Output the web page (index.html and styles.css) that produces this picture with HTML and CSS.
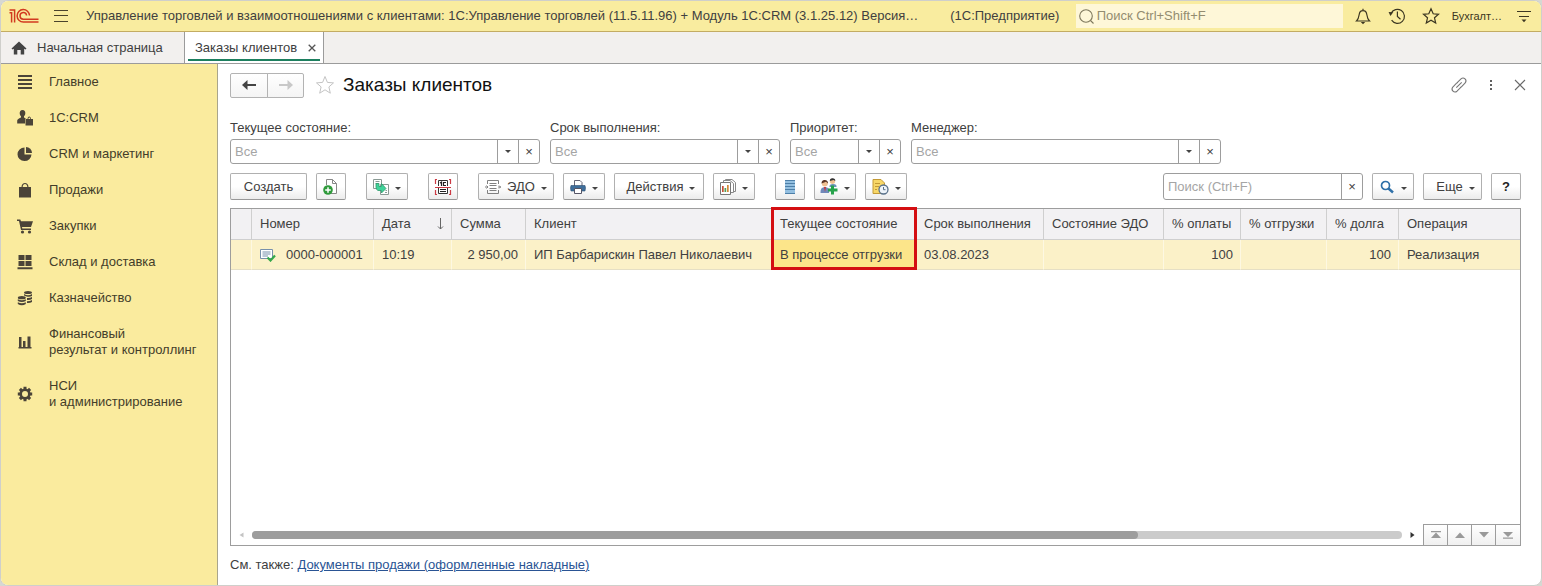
FILE: index.html
```html
<!DOCTYPE html>
<html lang="ru">
<head>
<meta charset="utf-8">
<title>Заказы клиентов</title>
<link rel="stylesheet" href="styles.css">
</head>
<body>
<div class="app">
  <header class="topbar">
    <svg class="logo" width="30" height="16" viewBox="0 0 30 16" fill="none" stroke="#d23a20" stroke-width="1.500">
      <path d="M0.500 4.800H2.600V14.500M0.500 2H5.600V14.500"/>
      <path d="M20.500 7.500A6.200 6.200 0 1 0 14.300 14H29.500"/>
      <path d="M17.600 7.500A3.300 3.300 0 1 0 14.300 11.200H29.500"/>
    </svg>
    <button class="plain menu" aria-label="Меню">
      <svg width="16" height="14" viewBox="0 0 16 14" stroke="#4a432c"><path d="M1 1.500H15M1 6.500H15M1 12.500H15"/></svg>
    </button>
    <div class="app-title"><span class="config">Управление торговлей и взаимоотношениями с клиентами: 1С:Управление торговлей (11.5.11.96) + Модуль 1С:CRM (3.1.25.12) Версия…</span><span>(1С:Предприятие)</span></div>
    <label class="global-search">
      <svg width="17" height="17" viewBox="0 0 17 17" fill="none" stroke="#7d775c" stroke-width="1.1"><circle cx="8" cy="8" r="6.3"/><path d="M12.500 12.500L15.500 15.500"/></svg>
      <input type="text" aria-label="Поиск" placeholder="Поиск Ctrl+Shift+F">
    </label>
    <div class="top-actions">
      <button class="plain" aria-label="Уведомления"><svg width="18" height="18" viewBox="0 0 18 18" fill="none" stroke="#3c3722" stroke-width="1.2"><path d="M2.500 14C4.500 12 4.800 10.500 5.200 7.500C5.500 5 7 3.600 9 3.600S12.500 5 12.800 7.500C13.200 10.500 13.500 12 15.500 14ZM9 3.600V1.800"/><path d="M6.800 15H11.200L9 17.200Z" fill="#3c3722" stroke="none"/></svg></button>
      <button class="plain" aria-label="История"><svg width="18" height="18" viewBox="0 0 18 18" fill="none" stroke="#3c3722" stroke-width="1.2"><path d="M3 6.600A7 7 0 1 1 3.600 13.200M9.400 4.600V9.500L12.500 12.300"/><path d="M0.600 5L5.300 5.300L2.400 9Z" fill="#3c3722" stroke="none"/></svg></button>
      <button class="plain" aria-label="Избранное"><svg width="18" height="18" viewBox="0 0 18 18" fill="none" stroke="#3c3722" stroke-width="1.200"><path d="M9 1.800L11.200 6.800L16.500 7.300L12.500 10.800L13.700 16L9 13.300L4.300 16L5.500 10.800L1.500 7.300L6.800 6.800Z"/></svg></button>
    </div>
    <button class="plain user">Бухгалт…</button>
    <button class="plain" aria-label="Настройки"><svg width="16" height="16" viewBox="0 0 16 16" stroke="#3c3722"><path d="M1 3.500H15M3 8.500H13"/><path d="M5.500 11.500H10.500L8 14.200Z" fill="#3c3722" stroke="none"/></svg></button>
  </header>

  <nav class="tabs">
    <a class="tab home" href="#"><svg width="16" height="14" viewBox="0 0 16 14" fill="#444"><path d="M8 0.500L15.500 7.500L14.500 8.500L13.200 7.700V13.500H9.700V9H6.300V13.500H2.800V7.700L1.500 8.500L0.500 7.500Z"/></svg>Начальная страница</a>
    <div class="tab active"><a href="#">Заказы клиентов</a><button class="plain" aria-label="Закрыть вкладку"><svg width="8" height="8" viewBox="0 0 8 8" stroke="#555" stroke-width="1.300"><path d="M0.700 0.700L7.300 7.300M7.300 0.700L0.700 7.300"/></svg></button></div>
  </nav>

  <div class="body">
    <nav class="sidebar">
      <a href="#"><svg viewBox="0 0 16 16"><path d="M1 1H15V3H1ZM1 5H15V7H1ZM1 9H15V11H1ZM1 13H15V15H1Z"/></svg>Главное</a>
      <a href="#"><svg viewBox="0 0 16 16"><path d="M5.500 0C7.500 0 8.500 1.300 8.300 3.500C8.200 5 7.500 5.800 7 6.300V7.500L9.500 8.700H8V13.500H0.200V10.500C0.500 9 2.500 8.500 4 7.600V6.300C3.300 5.700 2.700 4.800 2.700 3.300C2.700 1.300 3.500 0 5.500 0Z"/><path fill-rule="evenodd" d="M8.500 9H10.500C10.500 5.500 14 5.500 14 9H16V15.500H8.500ZM11.400 9H13.200C13.200 7 11.400 7 11.400 9Z"/></svg>1С:CRM</a>
      <a href="#"><svg viewBox="0 0 16 16"><path d="M7.500 1.500V8.500H14.500A7 6.800 0 1 1 7.500 1.500Z"/><path d="M9 1A6 6 0 0 1 15 7H9Z"/></svg>CRM и маркетинг</a>
      <a href="#"><svg viewBox="0 0 16 16"><path d="M2 5H4.500C4.500 -0.500 11.500 -0.500 11.500 5H14V15.500H2ZM5.700 5H10.300C10.300 1 5.700 1 5.700 5Z" fill-rule="evenodd"/></svg>Продажи</a>
      <a href="#"><svg viewBox="0 0 16 16"><path d="M0 1.500H3.300L4 3.200H16L14 9H5L5.300 10.500H14V12H4L2 3H0Z"/><circle cx="5.500" cy="14" r="1.600"/><circle cx="12.500" cy="14" r="1.600"/></svg>Закупки</a>
      <a href="#"><svg viewBox="0 0 16 16"><path d="M1.500 1H7.500V6H1.500ZM8.500 1H14.500V6H8.500ZM1.500 7H7.500V12H1.500ZM8.500 7H14.500V12H8.500ZM0.500 13.300H15.500V15.300H0.500Z"/></svg>Склад и доставка</a>
      <a href="#"><svg viewBox="0 0 16 16"><ellipse cx="11" cy="2.500" rx="4" ry="1.600"/><path d="M7 4Q11 6.500 15 4V6Q12.500 7.500 9 6.300L7 5.500ZM10 8Q13 8.200 15 7V9Q13 10.400 10 10ZM10 11.200Q13 11.200 15 10V12Q13 13.300 10 13Z"/><ellipse cx="4.800" cy="7.700" rx="4" ry="1.600"/><path d="M0.800 9.200Q4.800 11.500 8.800 9.200V11Q4.800 13 0.800 11ZM0.800 12.200Q4.800 14.500 8.800 12.200V14Q4.800 16.500 0.800 14Z"/></svg>Казначейство</a>
      <a href="#"><svg viewBox="0 0 16 16"><path d="M2 3H4.500V13H6V7H8.500V13H10.500V2.500H13.500V13H14.500V14.500H1.500V13H2Z"/></svg>Финансовый<br>результат и контроллинг</a>
      <a href="#"><svg viewBox="0 0 16 16"><circle cx="8" cy="8" r="4.300" fill="none" stroke="#4b4438" stroke-width="2.600"/><path d="M6.500 0.800H9.500V3.500H6.500ZM6.500 12.500H9.500V15.200H6.500ZM0.800 6.500H3.500V9.500H0.800ZM12.500 6.500H15.200V9.500H12.500Z"/><path d="M6.500 0.800H9.500V3.500H6.500ZM6.500 12.500H9.500V15.200H6.500ZM0.800 6.500H3.500V9.500H0.800ZM12.500 6.500H15.200V9.500H12.500Z" transform="rotate(45 8 8)"/></svg>НСИ<br>и администрирование</a>
    </nav>

    <main class="main">
      <div class="form-head">
        <div class="history">
          <button aria-label="Назад"><svg width="16" height="12" viewBox="0 0 16 12" stroke="#444" stroke-width="2.200" fill="none"><path d="M3 6H15"/><path d="M6.500 1L1 6L6.500 11Z" fill="#444" stroke="none"/></svg></button>
          <button aria-label="Вперед" disabled><svg width="16" height="12" viewBox="0 0 16 12" stroke="#c8c8c8" stroke-width="1.800" fill="none"><path d="M1 6H13"/><path d="M9.500 1L15 6L9.500 11Z" fill="#c8c8c8" stroke="none"/></svg></button>
        </div>
        <button class="plain" aria-label="В избранное"><svg width="20" height="20" viewBox="0 0 20 20" fill="none" stroke="#c3c3c3"><path d="M10 1.500L12.400 7.400L18.500 7.900L13.900 11.900L15.300 18.200L10 14.800L4.700 18.200L6.100 11.900L1.500 7.900L7.600 7.400Z"/></svg></button>
        <h1>Заказы клиентов</h1>
        <div class="form-tools">
          <button class="plain" aria-label="Ссылка"><svg width="18" height="18" viewBox="0 0 18 18" fill="none" stroke="#777" stroke-width="1.100"><path d="M6.300 11.700L11.700 6.300M7.200 6.600L11 2.800C13.800 0.500 17.500 4 15.200 7L11.400 10.800C11 11.200 10.600 11.400 10 11.500M10.800 11.400L7 15.200C4.200 17.500 0.500 14 2.800 11L6.600 7.200C7 6.800 7.400 6.600 8 6.500"/></svg></button>
          <button class="plain" aria-label="Еще"><svg width="4" height="12" viewBox="0 0 4 12" fill="#5f5f5f"><path d="M1 1H3V3H1ZM1 5H3V7H1ZM1 9H3V11H1Z"/></svg></button>
          <button class="plain" aria-label="Закрыть"><svg width="12" height="12" viewBox="0 0 12 12" stroke="#6a6a6a" stroke-width="1.100"><path d="M1 1L11 11M11 1L1 11"/></svg></button>
        </div>
      </div>

      <div class="filters">
        <div class="filter wide"><label for="f1">Текущее состояние:</label><div class="field"><input id="f1" type="text" placeholder="Все"><button aria-label="Выбрать"><i class="caret"></i></button><button aria-label="Очистить">×</button></div></div>
        <div class="filter medium"><label for="f2">Срок выполнения:</label><div class="field"><input id="f2" type="text" placeholder="Все"><button aria-label="Выбрать"><i class="caret"></i></button><button aria-label="Очистить">×</button></div></div>
        <div class="filter narrow"><label for="f3">Приоритет:</label><div class="field"><input id="f3" type="text" placeholder="Все"><button aria-label="Выбрать"><i class="caret"></i></button><button aria-label="Очистить">×</button></div></div>
        <div class="filter wide"><label for="f4">Менеджер:</label><div class="field"><input id="f4" type="text" placeholder="Все"><button aria-label="Выбрать"><i class="caret"></i></button><button aria-label="Очистить">×</button></div></div>
      </div>

      <div class="toolbar">
        <div class="group">
          <button class="btn create">Создать</button>
          <button class="btn icon" aria-label="Скопировать"><svg width="16" height="16" viewBox="0 0 16 16" fill="none"><path d="M3.500 6V0.500H9.500L13.500 4.500V14.500H8" fill="#fff" stroke="#888"/><path d="M9.500 0.500V4.500H13.500" stroke="#888"/><circle cx="5" cy="11" r="4.800" fill="#2f9a3b"/><path d="M5 8.200V13.800M2.200 11H7.800" stroke="#fff" stroke-width="1.500"/></svg></button>
        </div>
        <div class="group">
          <button class="btn drop" aria-label="Создать на основании"><svg width="16" height="16" viewBox="0 0 16 16" fill="none"><path d="M0.500 0.500H8.500V9.500H0.500Z" fill="#fff" stroke="#8a9a94"/><path d="M2.500 2.500H6.500M2.500 4.500H5" stroke="#8a9a94"/><path d="M7.500 5.500H15.500V15.500H7.500Z" fill="#fff" stroke="#8a9a94"/><path d="M12 13.500H14M12.500 11.500H14" stroke="#8a9a94"/><path d="M3 4.500H6V7.500H8.500V4.500L13 9.500L8.500 14V11.500H5Q3 11 3 8Z" fill="#3fd49a" stroke="#2f9a6c" stroke-width="0.800"/></svg><i class="caret"></i></button>
        </div>
        <div class="group">
          <button class="btn icon" aria-label="Штрихкод"><svg width="18" height="18" viewBox="0 0 18 18" fill="none"><path d="M4.500 8V2.500H13.500V8M4.500 10V15.500H13.500V10" fill="#fff" stroke="#333"/><path d="M6 11.500H12M6 13.500H12" stroke="#222"/><path d="M6 5L7.500 4V8M12 4.500H9.500V7.500H12" stroke="#222" stroke-width="1.200"/><path d="M3 1.500H1.500V6M15 1.500H16.500V6M1.500 12V16.500H3M16.500 12V16.500H15M1 9.500H17" stroke="#cc3a44" stroke-width="1.200"/></svg></button>
        </div>
        <div class="group">
          <button class="btn edo"><svg width="16" height="16" viewBox="0 0 16 16" fill="none" stroke="#808080"><path d="M2.500 5V1.500H13.500V5M2.500 11V14.500H13.500V11M4.500 4.500H11.500M4.500 6.500H11.500M4.500 9.500H11.500M4.500 11.500H11.500M0 8H3M13 8H16M14 6.500L15.500 8L14 9.500M1.500 6.500L3 8L1.500 9.500"/></svg>ЭДО<i class="caret"></i></button>
          <button class="btn drop" aria-label="Печать"><svg width="16" height="16" viewBox="0 0 16 16"><path d="M4.500 7V1.500H10L12 3.500V7" fill="#fff" stroke="#667"/><path d="M1 6.500H15Q16 9 15 12H1Q0 9 1 6.500Z" fill="#3f6f9c" stroke="#2b4e70" stroke-width="0.600"/><path d="M4.500 9.500H11.500V14.500H4.500Z" fill="#fff" stroke="#556"/></svg><i class="caret"></i></button>
          <button class="btn actions">Действия<i class="caret"></i></button>
          <button class="btn drop" aria-label="Отчеты"><svg width="16" height="16" viewBox="0 0 16 16" fill="#fff"><path d="M5.500 0.500H12L15.500 3.500V12.500H5.500Z" stroke="#888"/><path d="M3.500 1.500H10L13.500 4.500V13.500H3.500Z" stroke="#888"/><path d="M0.500 3.500H10.500V15.500H0.500Z" stroke="#777"/><path d="M2 7H3.700V13H2Z" fill="#c65036"/><path d="M4.500 9H6.200V13H4.500Z" fill="#54a05a"/><path d="M7 6H8.700V13H7Z" fill="#d38a37"/></svg><i class="caret"></i></button>
        </div>
        <div class="group">
          <button class="btn icon" aria-label="Список"><svg width="16" height="16" viewBox="0 0 16 16"><path d="M3 1H13V15H3Z" fill="#93bfe0"/><path d="M3 1.500H13M3 4.500H13M3 7.500H13M3 10.500H13M3 14.500H13" stroke="#4d7fa8"/></svg></button>
          <button class="btn drop" aria-label="Участники"><svg width="18" height="17" viewBox="0 0 18 17"><path d="M9.500 9Q9 6 13 6Q17 6 16.500 9Z" fill="#6e93b8"/><circle cx="12.500" cy="3.300" r="2.600" fill="#f0c193"/><path d="M9.800 3Q9.800 0 12.600 0.200Q15.400 0.200 15.300 3L13.500 2Z" fill="#333"/><path d="M0.500 15Q0 9 5 9Q10 9 9 15Z" fill="#7189ba"/><path d="M4 9H6L5 14Z" fill="#c33"/><circle cx="4.800" cy="5.500" r="3" fill="#f0c193"/><path d="M1.500 5.500Q1.500 1.800 4.800 2Q8 2 8 5.500L6 3.800Z" fill="#5a3525"/><path d="M11 7.500H14V10.500H17.500V13.500H14V16.500H11V13.500H8V10.500H11Z" fill="#27a34c"/></svg><i class="caret"></i></button>
          <button class="btn drop" aria-label="Сроки"><svg width="17" height="16" viewBox="0 0 17 16"><path d="M1 0.500H9L12.500 4V14.500H1Z" fill="#f7d768" stroke="#c39a36"/><path d="M3 4.500H8M3 7.500H7M3 10.500H5" stroke="#c39a36"/><circle cx="11.500" cy="10.500" r="4.500" fill="#eef4fa" stroke="#58708a" stroke-width="1.300"/><path d="M11.500 8V10.700H13.500" fill="none" stroke="#58708a"/></svg><i class="caret"></i></button>
        </div>
        <div class="group right">
          <div class="field search"><input type="text" aria-label="Поиск в списке" placeholder="Поиск (Ctrl+F)"><button aria-label="Очистить">×</button></div>
          <button class="btn drop" aria-label="Найти"><svg width="16" height="16" viewBox="0 0 16 16" fill="none" stroke="#2f70a8"><circle cx="6.500" cy="6.500" r="4" stroke-width="1.700"/><path d="M9.500 9.500L14 13.500" stroke-width="2.400"/></svg><i class="caret"></i></button>
          <button class="btn more">Еще<i class="caret"></i></button>
          <button class="btn icon help">?</button>
        </div>
      </div>

      <section class="list">
        <table>
          <colgroup><col class="c-mark"><col class="c-num"><col class="c-date"><col class="c-sum"><col class="c-client"><col class="c-state"><col class="c-due"><col class="c-edo"><col class="c-paid"><col class="c-ship"><col class="c-debt"><col></colgroup>
          <thead><tr><th></th><th>Номер</th><th><div class="sorted">Дата<svg width="8" height="12" viewBox="0 0 8 12" fill="none" stroke="#666"><path d="M4.500 0V11M2 8.500L4.500 11L7 8.500"/></svg></div></th><th>Сумма</th><th>Клиент</th><th class="highlight">Текущее состояние</th><th>Срок выполнения</th><th>Состояние ЭДО</th><th>% оплаты</th><th>% отгрузки</th><th>% долга</th><th>Операция</th></tr></thead>
          <tbody><tr><td></td><td><div class="number"><svg width="16" height="14" viewBox="0 0 16 14" fill="none"><path d="M0.500 1.500H12.500V10.500H0.500Z" fill="#fff" stroke="#7890ab"/><path d="M2.500 4H10.500M2.500 6H10.500M2.500 8H8" stroke="#7890ab"/><path d="M7.500 9.500L10.500 12.500L15 7.500" stroke="#35a84b" stroke-width="2.200"/></svg>0000-000001</div></td><td>10:19</td><td class="num">2 950,00</td><td>ИП Барбарискин Павел Николаевич</td><td class="current">В процессе отгрузки</td><td>03.08.2023</td><td></td><td class="num">100</td><td></td><td class="num">100</td><td>Реализация</td></tr></tbody>
        </table>
        <div class="list-foot">
          <div class="scroll"><svg width="5" height="6" viewBox="0 0 5 6" fill="#c4c4c4"><path d="M4.500 0.500V5.500L0.500 3Z"/></svg><div class="track"><div class="thumb"></div></div><svg width="5" height="6" viewBox="0 0 5 6" fill="#333"><path d="M0.500 0V6L4.500 3Z"/></svg></div>
          <div class="pager">
            <button aria-label="В начало"><svg width="12" height="8" viewBox="0 0 12 8" fill="#999"><path d="M1 0H11V1.200H1ZM6 1.500L11 7H1Z"/></svg></button>
            <button aria-label="Вверх"><svg width="12" height="8" viewBox="0 0 12 8" fill="#999"><path d="M6 1.500L11 7H1Z"/></svg></button>
            <button aria-label="Вниз"><svg width="12" height="8" viewBox="0 0 12 8" fill="#999"><path d="M6 6.500L11 1H1Z"/></svg></button>
            <button aria-label="В конец"><svg width="12" height="8" viewBox="0 0 12 8" fill="#999"><path d="M6 6L11 1H1ZM1 6.500H11V7.700H1Z"/></svg></button>
          </div>
        </div>
      </section>
      <footer class="see-also">См. также: <a href="#">Документы продажи (оформленные накладные)</a></footer>
    </main>
  </div>
</div>
</body>
</html>
```

FILE: styles.css
```css
* { box-sizing: border-box; }
body {
  margin: 0;
  background: #d6d8d2;
  color: #404040;
  font: 13px/16px "Liberation Sans", Arial, sans-serif;
}
button, input { font: inherit; color: inherit; }
button { padding: 0; }
svg { display: block; flex: none; }
.plain { display: flex; align-items: center; border: 0; background: none; }

.app {
  display: flex;
  flex-direction: column;
  min-height: 100vh;
  border: 1px solid #cfcfcb;
  border-radius: 8px;
  overflow: hidden;
  background: #fff;
}

/* Top bar */
.topbar {
  display: flex;
  align-items: center;
  height: 31px;
  padding: 0 9px 0 8px;
  border-bottom: 1px solid #c3ac63;
  background: #f9ec9f;
}
.menu { margin-left: 14px; }
.app-title { display: flex; flex: 1; gap: 32px; min-width: 0; margin-left: 17px; white-space: nowrap; }
.config { overflow: hidden; text-overflow: ellipsis; }
.global-search {
  display: flex;
  align-items: center;
  gap: 2px;
  width: 267px;
  height: 24px;
  padding-left: 2px;
  background: #fef7d8;
}
.global-search input { flex: 1; min-width: 0; padding: 0; border: 0; background: none; }
input::placeholder { color: #a5a5a5; opacity: 1; }
.global-search input::placeholder { color: #938c70; }
.top-actions { display: flex; gap: 16px; margin-left: 11px; }
.user { margin: 0 14px 0 12px; font-size: 11px; color: #3c3722; }

/* Window tabs */
.tabs { display: flex; height: 32px; border-bottom: 1px solid #9b9b9b; background: #f2f0ee; }
.tabs a { color: inherit; text-decoration: none; }
.tab { display: flex; align-items: center; }
.home { gap: 10px; width: 183px; padding-left: 10px; }
.active {
  justify-content: space-between;
  width: 140px;
  padding: 0 7px 0 10px;
  border: solid #9b9b9b;
  border-width: 0 1px;
  background: linear-gradient(#1d7f5f, #1d7f5f) center 27px / 132px 2px no-repeat #fff;
}
.active a { white-space: nowrap; }

.body { display: flex; flex: 1; }

/* Sections */
.sidebar {
  display: flex;
  flex: none;
  flex-direction: column;
  gap: 20px;
  width: 217px;
  padding: 10px 0 10px 16px;
  border-right: 1px solid #a9a58c;
  background: #faeb9e;
}
.sidebar a {
  display: grid;
  grid-template-columns: 16px 1fr;
  column-gap: 16px;
  align-items: center;
  color: #433d2a;
  text-decoration: none;
}
.sidebar svg { grid-row: 1 / span 3; width: 16px; height: 16px; fill: #4b4438; }

/* Form */
.main { display: flex; flex: 1; flex-direction: column; min-width: 0; padding: 8px 20px 12px 12px; }
.form-head { display: flex; align-items: center; height: 26px; }
.history { display: flex; margin-right: 11px; }
.history button {
  display: flex;
  align-items: center;
  justify-content: center;
  width: 38px;
  height: 25px;
  border: 1px solid #b3b3b3;
  border-radius: 2px 0 0 2px;
  background: linear-gradient(#fff, #f4f4f4);
}
.history button + button { width: 37px; margin-left: -1px; border-radius: 0 2px 2px 0; }
h1 { margin: 0 0 0 8px; font-size: 19px; font-weight: 400; line-height: 24px; color: #111; }
.form-tools { display: flex; align-items: center; gap: 21px; margin-left: auto; margin-right: -5px; }

.filters { display: flex; gap: 10px; margin-top: 22px; }
.filter label { display: block; margin-bottom: 3px; }
.wide { width: 310px; }
.medium { width: 230px; }
.narrow { width: 111px; }
.field { display: flex; height: 25px; border: 1px solid #9d9d9d; border-radius: 3px; background: #fff; }
.field input { flex: 1; min-width: 0; padding: 0 4px; border: 0; background: none; }
.field button {
  display: flex;
  align-items: center;
  justify-content: center;
  width: 21px;
  border: 0;
  border-left: 1px solid #9d9d9d;
  background: none;
}
.caret { width: 0; height: 0; border: 3px solid transparent; border-top-color: #444; border-bottom: 0; }

.toolbar { display: flex; gap: 20px; margin-top: 9px; }
.group { display: flex; gap: 9px; }
.right { margin-left: auto; }
.btn {
  display: flex;
  align-items: center;
  justify-content: center;
  gap: 6px;
  width: 42px;
  height: 27px;
  border: 1px solid #b0b0b0;
  border-bottom-color: #989898;
  border-radius: 2px;
  background: linear-gradient(#fff 50%, #ececec);
}
.btn .caret { margin-top: 4px; }
.create { width: 77px; }
.icon { width: 30px; }
.edo { width: 76px; }
.actions { width: 90px; padding-left: 4px; }
.more { width: 59px; padding-left: 6px; }
.help { font-weight: 700; color: #222; }
.search { width: 200px; height: 27px; }

/* Orders list */
.list { display: flex; flex: 1; flex-direction: column; margin-top: 8px; border: 1px solid #9d9d9d; }
table { width: 100%; table-layout: fixed; border-collapse: separate; border-spacing: 0; }
th, td { padding: 0 7px 0 8px; text-align: left; font-weight: 400; white-space: nowrap; }
th { position: relative; height: 31px; border-right: 1px solid #cfcfcf; border-bottom: 1px solid #cfcfcf; background: #f2f1f3; }
td { height: 30px; border-right: 1px solid #fdf8e2; border-bottom: 1px solid #e5dfc5; background: #fbf1c8; }
th:last-child, td:last-child { border-right: 0; }
.num { text-align: right; }
.c-mark { width: 21px; }
.c-num { width: 122px; }
.c-date { width: 78px; }
.c-sum { width: 74px; }
.c-client { width: 246px; }
.c-state { width: 144px; }
.c-due { width: 128px; }
.c-edo { width: 120px; }
.c-paid { width: 77px; }
.c-ship { width: 86px; }
.c-debt { width: 72px; }
.sorted { display: flex; align-items: center; justify-content: space-between; }
.number { display: flex; align-items: center; gap: 10px; }
.current { background: #fce58a; }
.highlight::after {
  content: "";
  position: absolute;
  z-index: 1;
  inset: -2px -2px -31px -1px;
  border: 3px solid #d40e12;
}

.list-foot { display: flex; align-items: flex-end; margin-top: auto; }
.scroll { display: flex; flex: 1; align-items: center; gap: 8px; height: 21px; padding: 0 8px; }
.track { flex: 1; height: 8px; border-radius: 4px; background: #cbcbcb; }
.thumb { width: 77%; height: 8px; border-radius: 4px; background: #9d9d9d; }
.pager { display: flex; border: solid #9d9d9d; border-width: 1px 0 0 1px; }
.pager button {
  display: flex;
  align-items: center;
  justify-content: center;
  width: 24px;
  height: 20px;
  border: 0;
  border-right: 1px solid #9d9d9d;
  background: linear-gradient(#fff, #f0f0f0);
}
.pager button:last-child { border-right: 0; }

.see-also { margin-top: 11px; }
.see-also a { color: #2a5494; }
```
